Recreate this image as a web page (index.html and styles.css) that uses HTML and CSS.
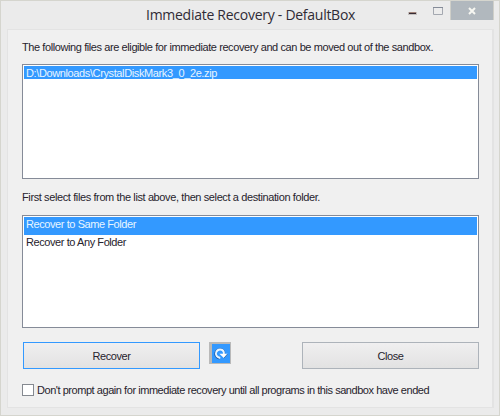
FILE: index.html
```html
<!DOCTYPE html>
<html lang="en">
<head>
<meta charset="utf-8">
<title>Immediate Recovery - DefaultBox</title>
<link rel="stylesheet" href="styles.css">
</head>
<body>
<div class="window">
  <header class="titlebar">
    <h1 class="title"><span>Immediate Recovery - DefaultBox</span></h1>
    <div class="controls">
      <svg class="min" width="9" height="3" viewBox="0 0 9 3"><path d="M0 0h9v3H0z" fill="#c5c1bf"/><path d="M1 0h7v2H1z" fill="#382c35"/><path d="M1 0h7v1H1z" fill="#a08278"/></svg>
      <svg class="max" width="10" height="8" viewBox="0 0 10 8"><path d="M.5.5h9v7h-9z" fill="#ececec" stroke="#a4a8b0"/><path d="M0 .5h10" stroke="#858b98"/></svg>
      <span class="x"><svg width="8" height="8" viewBox="0 0 8 8"><path d="M1 1l6 6M7 1L1 7" stroke="#f7f7f2" stroke-width="2"/></svg></span>
    </div>
  </header>
  <main class="panel">
    <p class="label intro"><span>The following files are eligible for immediate recovery and can be moved out of the sandbox.</span></p>
    <ul class="list files"><li class="selected"><span>D:\Downloads\CrystalDiskMark3_0_2e.zip</span></li></ul>
    <p class="label hint"><span>First select files from the list above, then select a destination folder.</span></p>
    <ul class="list folders"><li class="selected"><span>Recover to Same Folder</span></li><li><span>Recover to Any Folder</span></li></ul>
    <div class="actions">
      <button class="btn primary"><span>Recover</span></button>
      <button class="refresh" aria-label="Refresh"><svg width="19" height="19" viewBox="0 0 19 19"><path d="M8 15.200C4.500 14.500 2.300 11.500 3.200 8.500C4.600 4 11.600 3 13.300 8v3" fill="none" stroke="#26589c" stroke-width="1.200"/><path d="M8.700 14.200C5.200 13.600 3.400 11 4.300 8.500C5.500 4.500 11 4 12.500 8v3" fill="none" stroke="#e8f5ff" stroke-width="2"/><path d="M7.800 9.800H16.500L12.500 14.300z" fill="#fff"/><path d="M16.500 10L12.500 14.500" stroke="#4374a8" fill="none"/></svg></button>
      <button class="btn close"><span>Close</span></button>
    </div>
    <label class="check"><i class="box"></i><span>Don't prompt again for immediate recovery until all programs in this sandbox have ended</span></label>
  </main>
</div>
</body>
</html>
```
FILE: styles.css
```css
* { box-sizing: border-box; }
body { margin: 0; font: 11px/14px "Liberation Sans", Arial, sans-serif; color: #27232d; }
.window { width: 500px; height: 416px; background: #ebebeb; border: 1px solid #d5d5ce; padding: 0 5px 7px 6px; display: flex; flex-direction: column; }
.titlebar { height: 28px; flex: none; display: flex; justify-content: flex-end; }
.title { margin: 0; width: 262px; padding-top: 3px; font: 400 14px/22px "Open Sans", "Noto Sans", sans-serif; color: #302b36; white-space: nowrap; letter-spacing: -0.27px; }
.controls { display: flex; align-items: flex-start; height: 19px; }
.min { margin-top: 11px; margin-right: 16px; }
.max { margin-top: 6px; margin-right: 7px; }
.x { width: 44px; height: 19px; background: #b1b8be; border: solid #cfcfc9; border-width: 0 1px; display: flex; align-items: center; justify-content: center; }
.panel { flex: 1; background: #f0f0f0; border: 1px solid #e3e3e3; border-right-width: 2px; padding: 0 13px 0 14px; display: flex; flex-direction: column; }
.label { margin: 0; white-space: nowrap; }
.intro { height: 34px; padding-top: 10px; letter-spacing: -0.41px; }
.list { margin: 0; padding: 1px; list-style: none; background: #fff; border: 1px solid #858b98; flex: none; }
.files { height: 115px; }
.folders { height: 113px; }
.list li { padding-left: 2px; height: 18px; line-height: 14px; letter-spacing: -0.42px; white-space: nowrap; }
.files li { height: 13px; letter-spacing: -0.38px; }
.list .selected { background: #3399ff; color: #e7f5ff; }
.hint { height: 36px; padding-top: 11px; letter-spacing: -0.39px; }
.actions { display: flex; margin-top: 14px; height: 27px; padding-left: 1px; align-items: flex-start; }
.btn { padding: 0; height: 27px; width: 177px; font: inherit; color: inherit; letter-spacing: -0.45px; background: linear-gradient(#f0eff0, #e2e2e2); border: 1px solid #adb3ba; border-radius: 0; }
.primary { border-color: #3399ff; }
.refresh { width: 22px; height: 22px; padding: 0; margin-left: 9px; border: solid #b9b9b9; border-width: 2px 1px 1px 3px; background: #3399ff; display: flex; align-items: center; justify-content: center; }
.close { margin-left: auto; }
.check { display: flex; margin-top: 14px; height: 14px; align-items: center; white-space: nowrap; letter-spacing: -0.45px; }
.box { width: 12px; height: 12px; border: 1px solid #858990; background: #fff; margin-right: 3px; }
```
